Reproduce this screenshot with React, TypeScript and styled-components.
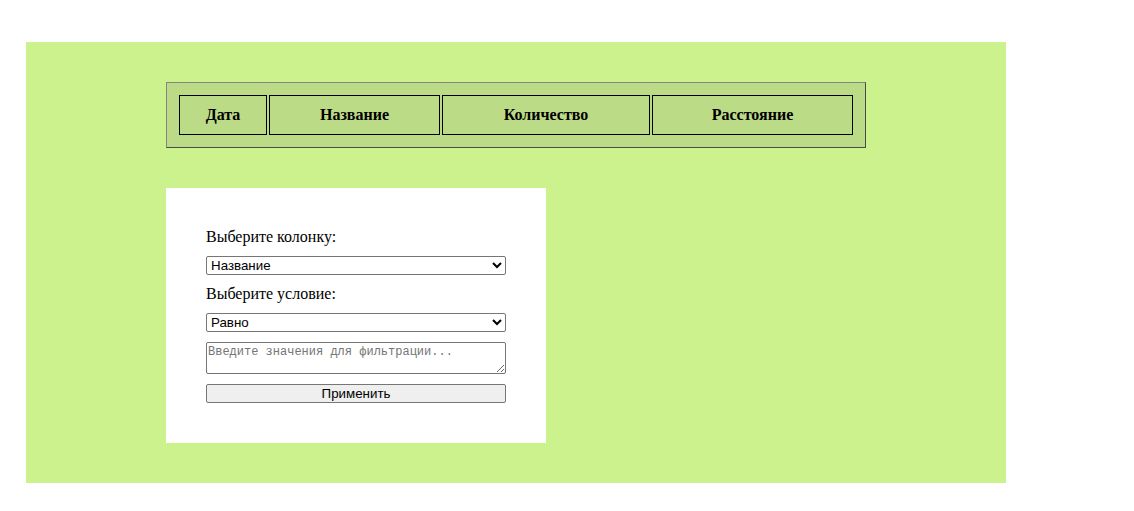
import React from "react";
import styled, { createGlobalStyle } from "styled-components";

const Global = createGlobalStyle`
  html, body { margin: 0; padding: 0; background: #ffffff; }
  body { font-family: "Liberation Serif", "Times New Roman", serif; font-size: 16px; color: #000; }
`;

const Page = styled.div`
  margin: 42px 0 0 26px;
  width: 700px;
  padding: 40px 140px;
  background: #ccf28e;
  display: flex;
  flex-direction: column;
  gap: 40px;
`;

const Table = styled.table`
  width: 700px;
  box-sizing: border-box;
  table-layout: fixed;
  border-collapse: separate;
  border-spacing: 2px;
  padding: 10px;
  background: #bcdb86;
  border: 1px solid;
  border-color: #858585 #4a4a4a #4a4a4a #858585;
`;

const Th = styled.th<{ $w: number }>`
  width: ${(p) => p.$w}px;
  box-sizing: border-box;
  height: 40px;
  padding: 0;
  border: 1px solid #000;
  font-family: "Liberation Serif", "Times New Roman", serif;
  font-weight: bold;
  font-size: 16px;
  text-align: center;
  vertical-align: middle;
`;

const Panel = styled.form`
  width: 380px;
  box-sizing: border-box;
  padding: 40px;
  background: #ffffff;
  display: flex;
  flex-direction: column;
  gap: 10px;
`;

const Label = styled.label`
  display: block;
  height: 18px;
  line-height: 18px;
  font-size: 16px;
  font-family: "Liberation Serif", "Times New Roman", serif;
`;

const Select = styled.select`
  width: 300px;
  height: 19px;
  box-sizing: border-box;
  margin: 0;
  font-family: "Liberation Sans", Arial, sans-serif;
  font-size: 13.333px;
  color: #000;
  background: #fff;
  border: 1px solid #767676;
  border-radius: 2px;
  padding: 0;
`;

const Area = styled.textarea`
  width: 300px;
  height: 32px;
  box-sizing: border-box;
  margin: 0;
  padding: 2px 1px;
  font-family: "Liberation Mono", "Courier New", monospace;
  font-size: 12px;
  border: 1px solid #767676;
  border-radius: 2px;
  &::placeholder { color: #757575; }
`;

const Button = styled.button`
  width: 300px;
  height: 19px;
  box-sizing: border-box;
  margin: 0;
  padding: 0;
  font-family: "Liberation Sans", Arial, sans-serif;
  font-size: 13.333px;
  color: #000;
  background: #efefef;
  border: 1px solid #767676;
  border-radius: 2px;
`;

export default function App() {
  return (
    <>
      <Global />
      <Page>
        <Table>
          <thead>
            <tr>
              <Th $w={88}>Дата</Th>
              <Th $w={171}>Название</Th>
              <Th $w={208}>Количество</Th>
              <Th $w={201}>Расстояние</Th>
            </tr>
          </thead>
        </Table>
        <Panel onSubmit={(e) => e.preventDefault()}>
          <Label htmlFor="col">Выберите колонку:</Label>
          <Select id="col" defaultValue="name">
            <option value="date">Дата</option>
            <option value="name">Название</option>
            <option value="qty">Количество</option>
            <option value="dist">Расстояние</option>
          </Select>
          <Label htmlFor="cond">Выберите условие:</Label>
          <Select id="cond" defaultValue="eq">
            <option value="eq">Равно</option>
            <option value="contains">Содержит</option>
            <option value="gt">Больше</option>
            <option value="lt">Меньше</option>
          </Select>
          <Area placeholder="Введите значения для фильтрации..." />
          <Button type="submit">Применить</Button>
        </Panel>
      </Page>
    </>
  );
}
